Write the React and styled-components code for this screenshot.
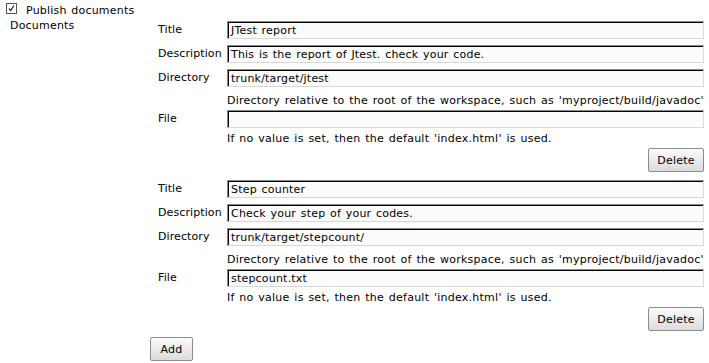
import React from "react";
import styled, { createGlobalStyle } from "styled-components";

const GlobalStyle = createGlobalStyle`
  body {
    margin: 0;
    background: #fff;
    font-family: "DejaVu Sans", Verdana, sans-serif;
    font-size: 11px;
    letter-spacing: 0.2px;
    word-spacing: 1px;
    color: #000;
  }
`;

const Page = styled.div`
  width: 709px;
  height: 363px;
  overflow: hidden;
  padding-right: 5px;
  box-sizing: border-box;
`;

const Header = styled.label`
  display: flex;
  align-items: flex-start;
  gap: 9px;
  height: 18px;
  padding-left: 6px;
  box-sizing: border-box;
`;

const CheckBox = styled.span`
  width: 11px;
  height: 11px;
  margin-top: 3px;
  box-sizing: border-box;
  border: 1px solid #555;
  background: #fff;
  display: flex;
  align-items: center;
  justify-content: center;
`;

const HeaderText = styled.span`
  padding-top: 4px;
  line-height: 14px;
`;

const Section = styled.div`
  display: grid;
  grid-template-columns: 150px 1fr;
`;

const SectionLabel = styled.div`
  padding: 1px 0 0 10px;
  line-height: 14px;
`;

const Body = styled.div`
  display: flex;
  flex-direction: column;
  padding-top: 3px;
`;

const Entry = styled.div`
  display: grid;
  grid-template-columns: 69px 1fr;
  padding-left: 8px;
  margin-bottom: ${(p) => (p.$last ? "6px" : "8px")};
`;

const Label = styled.div`
  height: 18px;
  line-height: 18px;
  margin-bottom: ${(p) => p.$gap || "6px"};
  white-space: nowrap;
  letter-spacing: 0.1px;
`;

const Field = styled.div`
  height: 18px;
  box-sizing: border-box;
  border-top: 1px solid #8a8a8a;
  border-left: 1px solid #8a8a8a;
  border-right: 1px solid #d8d8d8;
  border-bottom: 1px solid #d8d8d8;
  box-shadow: inset 1px 1px 0 #000;
  background: #fcfcfc;
  padding: 0 3px;
  line-height: 17px;
  margin-bottom: ${(p) => p.$gap || "6px"};
  white-space: nowrap;
  overflow: hidden;
`;

const Help = styled.div`
  grid-column: 2;
  padding-top: 1px;
  line-height: 14px;
  margin-bottom: 2px;
  white-space: nowrap;
  letter-spacing: 0.25px;
`;

const Actions = styled.div`
  grid-column: 1 / 3;
  display: flex;
  justify-content: ${(p) => (p.$left ? "flex-start" : "flex-end")};
`;

const Button = styled.button`
  height: 24px;
  width: ${(p) => p.$w}px;
  box-sizing: border-box;
  border: 1px solid #8c8c8c;
  border-radius: 2px;
  background: linear-gradient(#fafafa, #dcdcdc);
  font-family: "DejaVu Sans", Verdana, sans-serif;
  font-size: 11px;
  letter-spacing: 0.2px;
  color: #000;
  padding: 0;
`;

const Check = () => (
  <svg width="9" height="9" viewBox="0 0 9 9">
    <path d="M2 4.5 L3.8 6.5 L7 1.5" fill="none" stroke="#222" strokeWidth="1.2" />
  </svg>
);

const entries = [
  {
    title: "JTest report",
    description: "This is the report of Jtest. check your code.",
    directory: "trunk/target/jtest",
    file: "",
  },
  {
    title: "Step counter",
    description: "Check your step of your codes.",
    directory: "trunk/target/stepcount/",
    file: "stepcount.txt",
  },
];

const DocEntry = ({ doc, last }) => (
  <Entry $last={last}>
    <Label>Title</Label>
    <Field>{doc.title}</Field>
    <Label>Description</Label>
    <Field>{doc.description}</Field>
    <Label $gap="0">Directory</Label>
    <Field $gap="6px">{doc.directory}</Field>
    <Help>Directory relative to the root of the workspace, such as 'myproject/build/javadoc'</Help>
    <Label $gap="3px">File</Label>
    <Field $gap="3px">{doc.file}</Field>
    <Help>If no value is set, then the default 'index.html' is used.</Help>
    <Actions>
      <Button $w={56}>Delete</Button>
    </Actions>
  </Entry>
);

export default function App() {
  return (
    <Page>
      <GlobalStyle />
      <Header>
        <CheckBox>
          <Check />
        </CheckBox>
        <HeaderText>Publish documents</HeaderText>
      </Header>
      <Section>
        <SectionLabel>Documents</SectionLabel>
        <Body>
          {entries.map((doc, i) => (
            <DocEntry key={i} doc={doc} last={i === entries.length - 1} />
          ))}
          <Actions $left>
            <Button $w={43}>Add</Button>
          </Actions>
        </Body>
      </Section>
    </Page>
  );
}
